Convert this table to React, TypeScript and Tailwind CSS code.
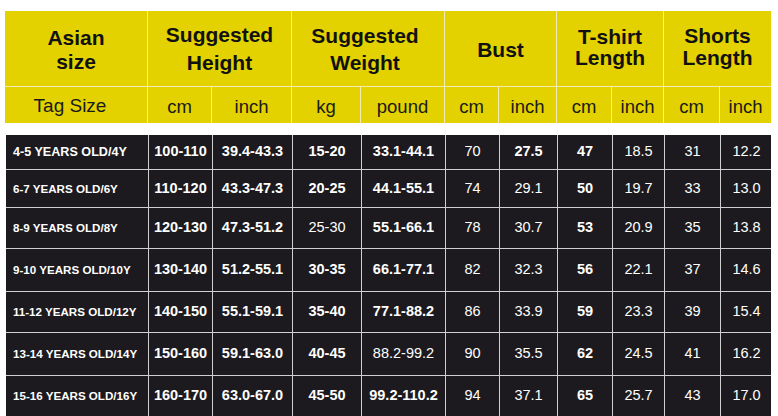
import React from 'react';

const COLS = 'grid grid-cols-[143px_64px_80px_69px_84px_54px_58px_55px_52px_56px_51px]';

type Row = { cells: string[]; light: number[]; h: string };

// light = column indexes drawn in normal weight
const rows: Row[] = [
  { h: 'h-[34px]', cells: ['4-5 YEARS OLD/4Y', '100-110', '39.4-43.3', '15-20', '33.1-44.1', '70', '27.5', '47', '18.5', '31', '12.2'], light: [5, 8, 9, 10] },
  { h: 'h-[38px]', cells: ['6-7 YEARS OLD/6Y', '110-120', '43.3-47.3', '20-25', '44.1-55.1', '74', '29.1', '50', '19.7', '33', '13.0'], light: [5, 6, 8, 9, 10] },
  { h: 'h-[41px]', cells: ['8-9 YEARS OLD/8Y', '120-130', '47.3-51.2', '25-30', '55.1-66.1', '78', '30.7', '53', '20.9', '35', '13.8'], light: [3, 5, 6, 8, 9, 10] },
  { h: 'h-[43px]', cells: ['9-10 YEARS OLD/10Y', '130-140', '51.2-55.1', '30-35', '66.1-77.1', '82', '32.3', '56', '22.1', '37', '14.6'], light: [5, 6, 8, 9, 10] },
  { h: 'h-[41px]', cells: ['11-12 YEARS OLD/12Y', '140-150', '55.1-59.1', '35-40', '77.1-88.2', '86', '33.9', '59', '23.3', '39', '15.4'], light: [5, 6, 8, 9, 10] },
  { h: 'h-[43px]', cells: ['13-14 YEARS OLD/14Y', '150-160', '59.1-63.0', '40-45', '88.2-99.2', '90', '35.5', '62', '24.5', '41', '16.2'], light: [4, 5, 6, 8, 9, 10] },
  { h: 'h-[41px]', cells: ['15-16 YEARS OLD/16Y', '160-170', '63.0-67.0', '45-50', '99.2-110.2', '94', '37.1', '65', '25.7', '43', '17.0'], light: [5, 6, 8, 9, 10] },
];

const units = ['Tag Size', 'cm', 'inch', 'kg', 'pound', 'cm', 'inch', 'cm', 'inch', 'cm', 'inch'];

function HeadCell({ lines, span, lead, last, extra }: { lines: string[]; span?: boolean; lead: string; last?: boolean; extra?: string }) {
  return (
    <div
      className={`${span ? 'col-span-2' : ''} ${last ? '' : 'border-r'} border-b border-[#f3ecb0] flex flex-col items-center justify-center text-[21px] font-bold text-[#111] ${lead} ${extra ?? ''}`}
    >
      {lines.map((l) => (
        <span key={l}>{l}</span>
      ))}
    </div>
  );
}

export default function App() {
  return (
    <div className="w-[778px] h-[416px] bg-white overflow-hidden pt-[11px] pl-[5px] font-['Liberation_Sans',Arial,sans-serif]">
      {/* yellow header */}
      <div className={`${COLS} w-[766px] bg-[#e3d100]`}>
        <div className="h-[76px] border-r border-b border-[#f3ecb0] flex flex-col items-center justify-center text-[21px] font-bold text-[#111] leading-[24px] pt-[2px]">
          <span>Asian</span>
          <span>size</span>
        </div>
        <HeadCell lines={['Suggested', 'Height']} span lead="leading-[28px]" />
        <HeadCell lines={['Suggested', 'Weight']} span lead="leading-[27px]" extra="pr-[6px]" />
        <HeadCell lines={['Bust']} span lead="leading-[24px]" extra="pt-[2px]" />
        <HeadCell lines={['T-shirt', 'Length']} span lead="leading-[21px]" extra="pb-[3px]" />
        <HeadCell lines={['Shorts', 'Length']} span last lead="leading-[22px]" extra="pb-[4px]" />
        {units.map((u, i) => (
          <div
            key={i}
            className={`h-[36px] flex items-center justify-center pt-[3px] text-[#1a1a1a] ${i === 0 ? 'pr-3 text-[19px]' : 'text-[18.5px]'} ${i < units.length - 1 ? 'border-r border-[#f3ecb0]' : ''}`}
          >
            {u}
          </div>
        ))}
      </div>

      {/* dark body */}
      <div className="mt-[12px] ml-px w-[765px] bg-[#1c1a1e] text-white">
        {rows.map((r, ri) => (
          <div key={ri} className={`${COLS} ${r.h} ${ri > 0 ? 'border-t border-[#cfcfcf]' : ''}`}>
            {r.cells.map((c, ci) => (
              <div
                key={ci}
                className={`flex items-center whitespace-nowrap ${ci === 0 ? `justify-start pl-[7px] font-bold ${ri === 0 ? 'text-[12.6px]' : 'text-[11.6px]'}` : `justify-center text-[14.5px] ${r.light.includes(ci) ? 'font-normal' : 'font-bold'}`} ${ci < r.cells.length - 1 ? 'border-r border-[#cfcfcf]' : ''}`}
              >
                {c}
              </div>
            ))}
          </div>
        ))}
      </div>
    </div>
  );
}
